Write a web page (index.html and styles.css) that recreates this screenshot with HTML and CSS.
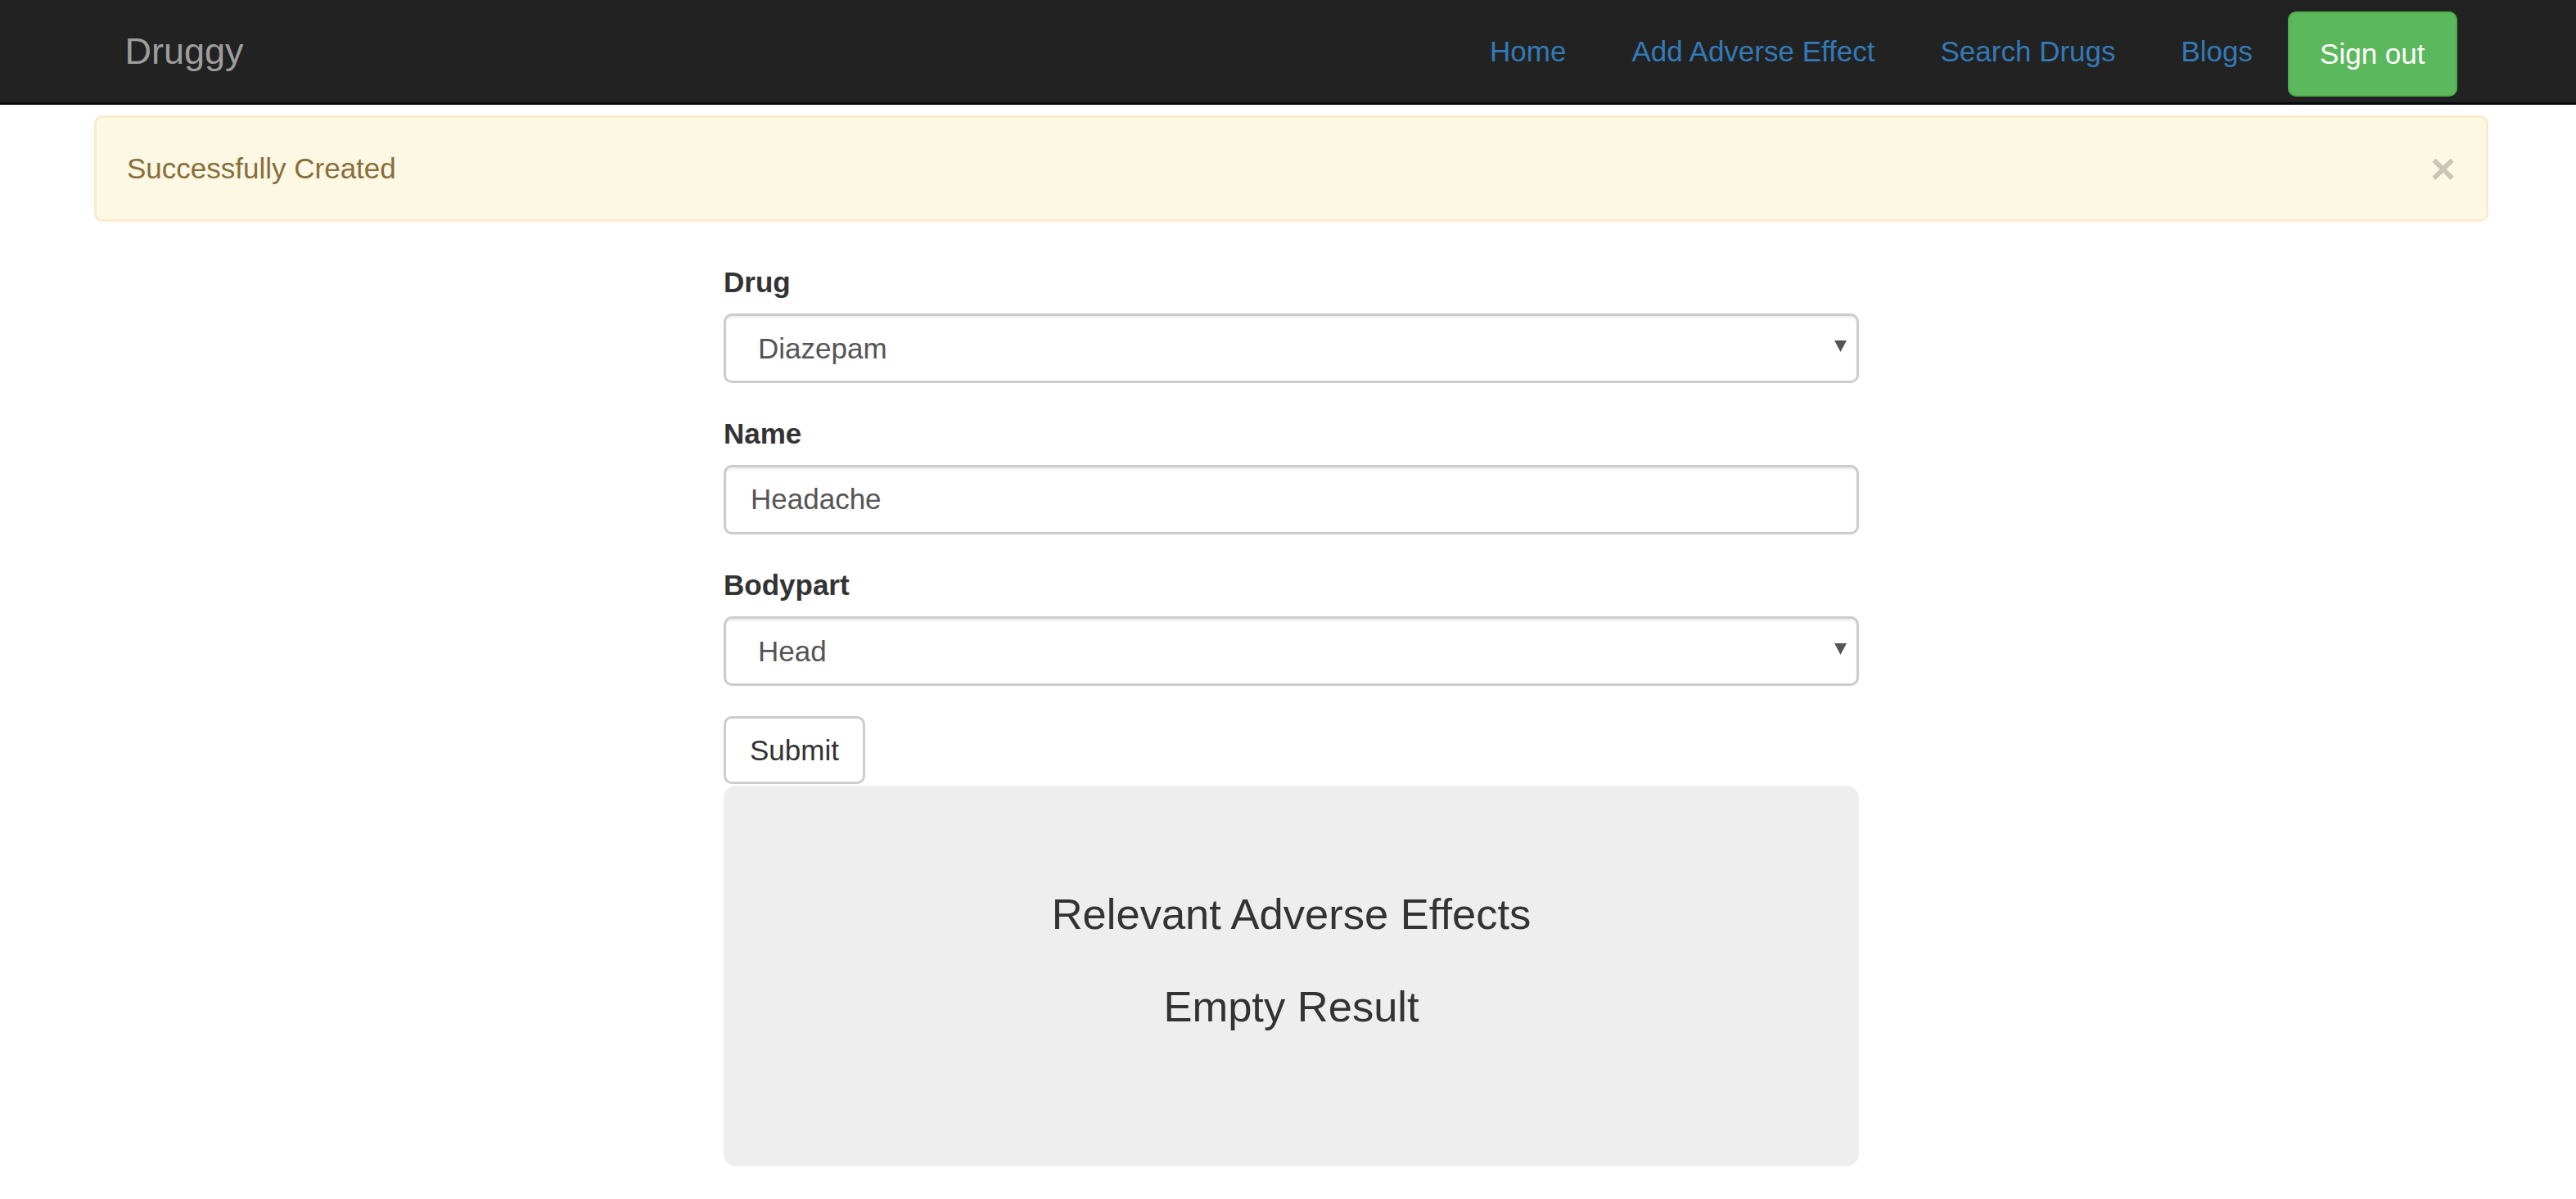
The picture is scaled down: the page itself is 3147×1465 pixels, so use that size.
FILE: index.html
```html
<!DOCTYPE html>
<html lang="en">
<head>
<meta charset="utf-8">
<title>Druggy</title>
<link rel="stylesheet" href="styles.css">
</head>
<body>
<nav class="navbar">
  <div class="container nav-inner">
    <a class="brand" href="#">Druggy</a>
    <ul class="nav-links">
      <li><a href="#">Home</a></li>
      <li><a href="#">Add Adverse Effect</a></li>
      <li><a href="#">Search Drugs</a></li>
      <li><a href="#">Blogs</a></li>
      <li><a class="signout" href="#">Sign out</a></li>
    </ul>
  </div>
</nav>
<div class="container">
  <div class="alert">
    <span>Successfully Created</span>
    <button class="close" type="button">&times;</button>
  </div>
  <div class="form-col">
    <form>
      <div class="form-group">
        <label for="drug">Drug</label>
        <div class="select-wrap">
          <select id="drug" class="form-control select">
            <option>Diazepam</option>
            <option>Aspirin</option>
          </select>
          <svg class="select-arrow" viewBox="0 0 15 14" width="15" height="14"><polygon points="0,0 15,0 7.5,14"/></svg>
        </div>
      </div>
      <div class="form-group">
        <label for="name">Name</label>
        <input id="name" class="form-control" type="text" value="Headache">
      </div>
      <div class="form-group">
        <label for="bodypart">Bodypart</label>
        <div class="select-wrap">
          <select id="bodypart" class="form-control select">
            <option>Head</option>
            <option>Chest</option>
          </select>
          <svg class="select-arrow" viewBox="0 0 15 14" width="15" height="14"><polygon points="0,0 15,0 7.5,14"/></svg>
        </div>
      </div>
      <button class="btn" type="submit">Submit</button>
    </form>
    <div class="jumbotron">
      <h3>Relevant Adverse Effects</h3>
      <h3>Empty Result</h3>
    </div>
  </div>
</div>
</body>
</html>
```

FILE: styles.css
```css
* {
  box-sizing: border-box;
}

html,
body {
  margin: 0;
  padding: 0;
}

body {
  font-family: "Liberation Sans", Arial, Helvetica, sans-serif;
  font-size: 35px;
  line-height: 50px;
  color: #333;
  background: #fff;
}

.container {
  width: 2925px;
  margin-left: calc(50% - 1458.5px);
}

/* Navbar */
.navbar {
  background: #222;
  border-bottom: 3px solid #080808;
}

.nav-inner {
  height: 125px;
  display: flex;
  align-items: center;
  justify-content: space-between;
  padding: 0 38px 0 37.5px;
}

.brand {
  font-size: 45px;
  line-height: 50px;
  color: #9d9d9d;
  text-decoration: none;
}

.nav-links {
  display: flex;
  align-items: center;
  gap: 5px;
  list-style: none;
  margin: 0;
  padding: 0;
}

.nav-links a {
  display: block;
  padding: 37.5px;
  line-height: 50px;
  color: #337ab7;
  text-decoration: none;
}

.nav-links a.signout {
  padding: 25px 37.5px;
  margin-top: 6px;
  background: #5cb85c;
  border: 2.5px solid #4cae4c;
  border-radius: 10px;
  color: #fff;
}

/* Alert */
.alert {
  margin-top: 13px;
  margin-bottom: 49.5px;
  display: flex;
  align-items: center;
  justify-content: space-between;
  padding: 35.5px 37px;
  background: #fcf8e3;
  border: 3px solid #faebcc;
  border-radius: 10px;
  color: #8a6d3b;
  line-height: 50px;
}

.close {
  font-family: inherit;
  font-size: 52.5px;
  font-weight: bold;
  line-height: 1;
  color: #c9c6b5;
  background: none;
  border: 0;
  padding: 0;
  cursor: pointer;
}

/* Form */
.form-col {
  width: 1387px;
  margin: 0 auto;
}

.form-group {
  margin-bottom: 37.5px;
}

label {
  display: block;
  font-weight: bold;
  line-height: 50px;
  margin-bottom: 12.5px;
}

.form-control {
  display: block;
  width: 100%;
  height: 85px;
  margin: 0;
  padding: 0 30px;
  font-family: inherit;
  font-size: 35px;
  color: #555;
  background: #fff;
  border: 3px solid #ccc;
  border-radius: 10px;
  box-shadow: inset 0 2.5px 2.5px rgba(0, 0, 0, 0.075);
  outline: none;
}

.select {
  -webkit-appearance: none;
  appearance: none;
  padding-left: 39px;
}

.select-wrap {
  position: relative;
}

.select-arrow {
  position: absolute;
  right: 15px;
  top: 50%;
  margin-top: -9px;
  pointer-events: none;
  fill: #555;
}

.btn {
  display: block;
  height: 83px;
  margin-bottom: 2px;
  padding: 0 29px;
  font-family: inherit;
  font-size: 35px;
  line-height: 77px;
  color: #333;
  background: #fff;
  border: 3px solid #ccc;
  border-radius: 10px;
  cursor: pointer;
}

/* Result panel */
.jumbotron {
  height: 465px;
  padding-top: 128px;
  background: #eee;
  border-radius: 15px;
  text-align: center;
}

.jumbotron h3 {
  margin: 0;
  font-size: 52.5px;
  font-weight: normal;
  line-height: 58px;
}

.jumbotron h3 + h3 {
  margin-top: 55px;
}
```
